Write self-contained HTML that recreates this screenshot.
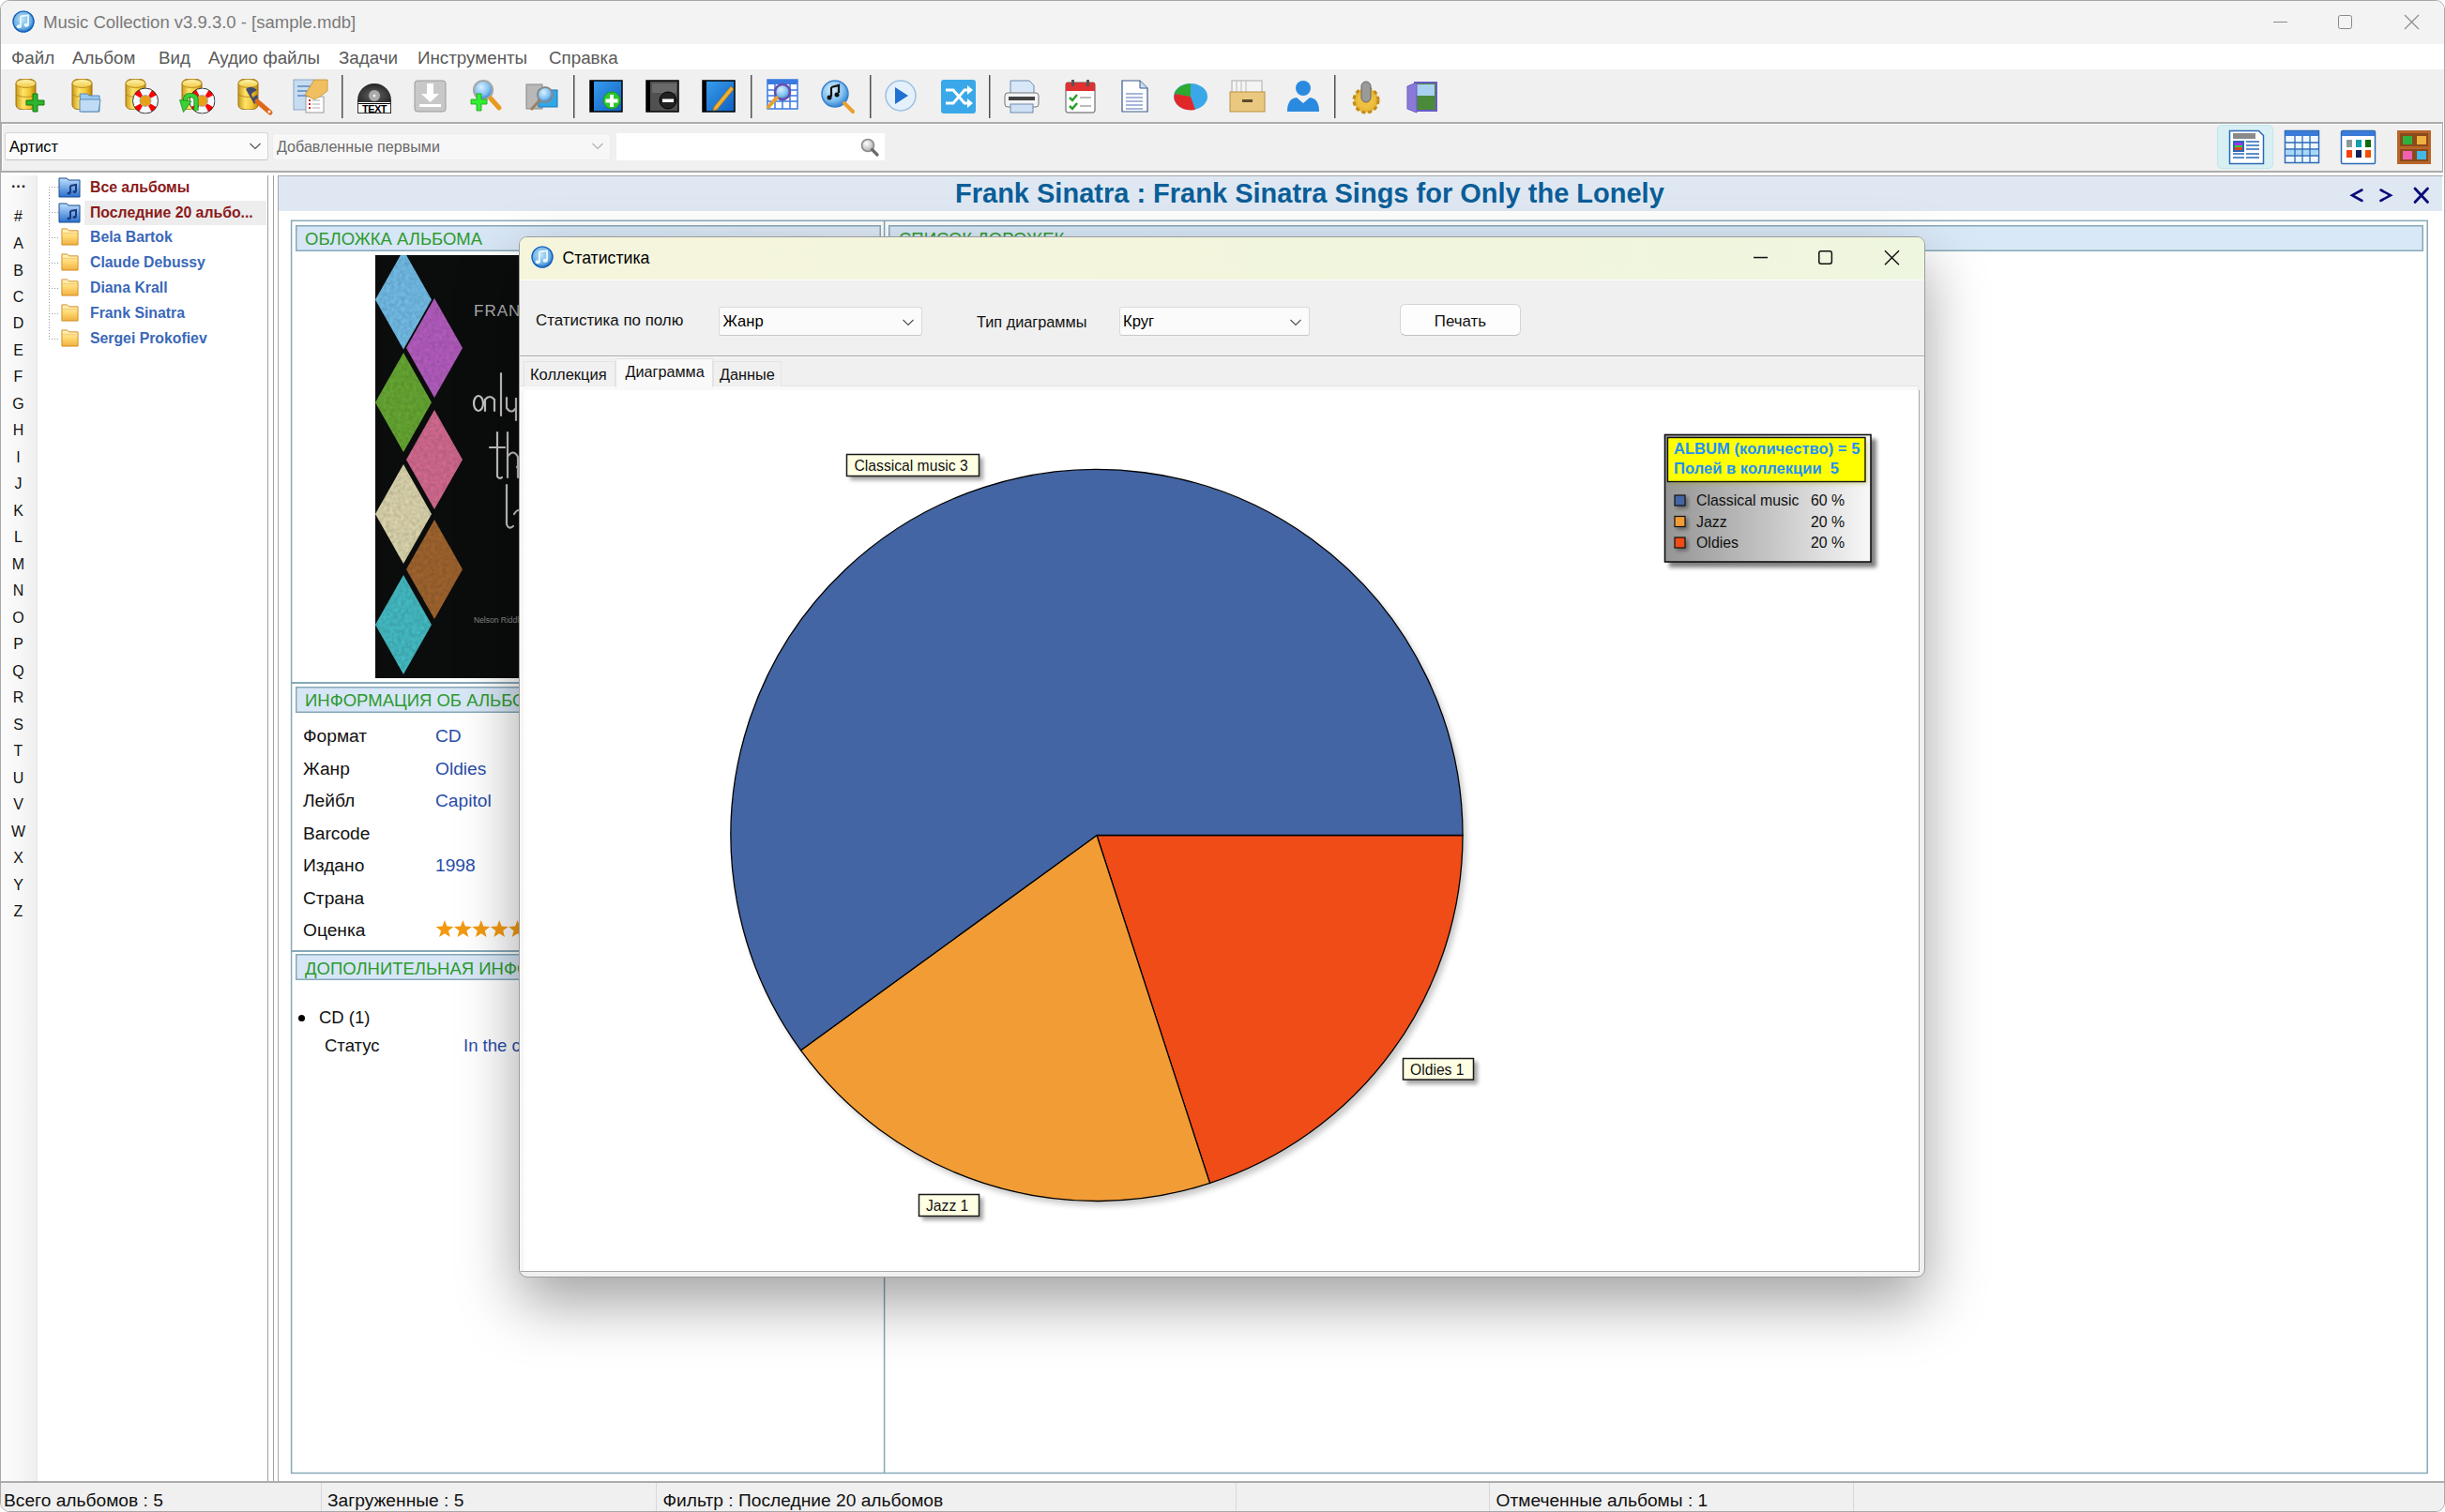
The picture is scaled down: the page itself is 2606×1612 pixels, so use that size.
<!DOCTYPE html>
<html><head><meta charset="utf-8">
<style>
*{box-sizing:border-box;margin:0;padding:0}
html,body{width:2606px;height:1612px;overflow:hidden;background:#ffffff;font-family:"Liberation Sans",sans-serif}
.a{position:absolute}
.t{position:absolute;white-space:nowrap;line-height:1}
</style></head><body>
<!-- window frame -->
<div class="a" style="left:0;top:0;width:2606px;height:1612px;border:1px solid #a8a8a8;border-radius:10px;overflow:hidden;background:#fff">
</div>

<!-- title bar -->
<div class="a" id="titlebar" style="left:1px;top:1px;width:2604px;height:46px;background:#f3f3f3;border-radius:9px 9px 0 0"></div>
<div class="t" style="left:46px;top:15px;font-size:18.5px;color:#7a7a7a">Music Collection v3.9.3.0 - [sample.mdb]</div>

<!-- menu -->
<div class="a" style="left:1px;top:47px;width:2604px;height:27px;background:#ffffff"></div>
<div class="t" style="top:53px;font-size:18.8px;color:#5a5a5a;left:12px">Файл</div>
<div class="t" style="top:53px;font-size:18.8px;color:#5a5a5a;left:77px">Альбом</div>
<div class="t" style="top:53px;font-size:18.8px;color:#5a5a5a;left:169px">Вид</div>
<div class="t" style="top:53px;font-size:18.8px;color:#5a5a5a;left:222px">Аудио файлы</div>
<div class="t" style="top:53px;font-size:18.8px;color:#5a5a5a;left:361px">Задачи</div>
<div class="t" style="top:53px;font-size:18.8px;color:#5a5a5a;left:445px">Инструменты</div>
<div class="t" style="top:53px;font-size:18.8px;color:#5a5a5a;left:585px">Справка</div>

<!-- toolbar -->
<div class="a" style="left:1px;top:74px;width:2604px;height:56px;background:#f0f0f0"></div>
<!-- second toolbar panel -->
<div class="a" style="left:1px;top:130px;width:2603px;height:54px;background:#f0f0f0;border:1px solid #acacac;border-top-width:2px;border-bottom-width:2px;box-shadow:inset 1px 1px 0 #fbfbfb"></div>


<!-- toolbar icons -->
<svg class="a" style="left:0;top:0" width="1600" height="130" viewBox="0 0 1600 130">
<defs>
<linearGradient id="gold" x1="0" x2="1" y1="0" y2="0"><stop offset="0" stop-color="#c99a1a"/><stop offset="0.35" stop-color="#ffe46a"/><stop offset="0.7" stop-color="#f2c532"/><stop offset="1" stop-color="#b8860b"/></linearGradient>
<linearGradient id="goldtop" x1="0" x2="0" y1="0" y2="1"><stop offset="0" stop-color="#fff6b0"/><stop offset="1" stop-color="#f0c840"/></linearGradient>
<linearGradient id="blueb" x1="0" x2="1" y1="0" y2="1"><stop offset="0" stop-color="#3aa0f0"/><stop offset="1" stop-color="#1060c0"/></linearGradient>
<radialGradient id="bluec" cx="0.4" cy="0.35" r="0.7"><stop offset="0" stop-color="#d8f0ff"/><stop offset="0.6" stop-color="#7fc0f0"/><stop offset="1" stop-color="#2a78c8"/></radialGradient>
<symbol id="db" viewBox="0 0 23 33"><path d="M1 5 Q1 0 11.5 0 Q22 0 22 5 V28 Q22 33 11.5 33 Q1 33 1 28 Z" fill="url(#gold)" stroke="#a07010" stroke-width="1"/><ellipse cx="11.5" cy="5" rx="10.5" ry="4.5" fill="url(#goldtop)" stroke="#b08018" stroke-width="0.8"/><path d="M1 17 Q11.5 22 22 17" fill="none" stroke="#b08018" stroke-width="0.8"/></symbol>
<symbol id="ring" viewBox="0 0 28 28"><circle cx="14" cy="14" r="9.8" fill="none" stroke="#f4fbff" stroke-width="7.5"/><circle cx="14" cy="14" r="9.8" fill="none" stroke="#f00" stroke-width="7.5" stroke-dasharray="5.2 10.2" stroke-dashoffset="-5" /><circle cx="14" cy="14" r="13.5" fill="none" stroke="#333" stroke-width="1"/><circle cx="14" cy="14" r="6" fill="#e8a018" stroke="#9ab" stroke-width="0.8"/></symbol>
</defs>
<!-- 1 db plus -->
<use href="#db" x="16" y="84" width="23" height="33"/>
<path d="M35 100h5v7h7v5h-7v7h-5v-7h-7v-5h7z" fill="#2db52d" stroke="#137a13" stroke-width="1"/>
<!-- 2 db folder -->
<use href="#db" x="76" y="84" width="23" height="33"/>
<path d="M85 100h8l2 2h11v17h-19z" fill="#9cc8ec" stroke="#5a8ab8" stroke-width="1"/><path d="M85 106h22l-2 13h-20z" fill="#c0dcf4" stroke="#5a8ab8" stroke-width="1"/>
<!-- 3 db ring -->
<use href="#db" x="133" y="84" width="23" height="33"/>
<use href="#ring" x="141" y="93.5" width="28" height="28"/>
<!-- 4 db arrow ring -->
<use href="#db" x="193" y="84" width="23" height="33"/>
<use href="#ring" x="201.5" y="93.5" width="28" height="28"/>
<path d="M209 118 V107 Q209 101.5 203 101.5 Q197.5 101.5 197.5 107 V109" fill="none" stroke="#189018" stroke-width="5.2"/><path d="M209 118 V107 Q209 101.5 203 101.5 Q197.5 101.5 197.5 107 V109" fill="none" stroke="#3ad03a" stroke-width="3.4"/><polygon points="191.5,106.5 204,108 195.5,119.5" fill="#3ad03a" stroke="#189018" stroke-width="0.8"/>
<!-- 5 db wrench -->
<use href="#db" x="253" y="84" width="23" height="33"/>
<path d="M262 95 q6 -5 12 1 l-5 3 q-2 3 1 5 l4 -3 q3 6 -3 10 z" fill="#404a70"/>
<path d="M274 108 l14 12" stroke="#e06a18" stroke-width="5" stroke-linecap="round"/><circle cx="287" cy="119" r="1.5" fill="#fff"/>
<!-- 6 doc hand -->
<rect x="313" y="85" width="22" height="32" fill="#c8dcf0" stroke="#8aa8c8"/>
<path d="M317 92h14M317 97h14M317 102h12" stroke="#5a88c0" stroke-width="1.5"/>
<rect x="326" y="103" width="19" height="17" fill="#fff" stroke="#999"/>
<path d="M329 107h2M329 111h2M329 115h2" stroke="#d02020" stroke-width="2"/><path d="M333 107h8M333 111h8M333 115h8" stroke="#aaa" stroke-width="1"/>
<path d="M325 101 l10 -16 h14 v12 l-8 6 l-6 3z" fill="#f0c060" stroke="#c09030" stroke-width="0.8"/>
<!-- sep -->
<rect x="364" y="80" width="1.5" height="46" fill="#505050"/>
<!-- 7 TEXT vinyl -->
<defs><radialGradient id="vin" cx="0.5" cy="0.6" r="0.6"><stop offset="0" stop-color="#666"/><stop offset="1" stop-color="#222"/></radialGradient></defs>
<path d="M381 107 a18 18 0 0 1 36 0 v3 h-36z" fill="url(#vin)"/><circle cx="399" cy="102" r="6" fill="#aaa"/><circle cx="399" cy="102" r="1.5" fill="#eee"/>
<rect x="381.5" y="108.5" width="35" height="12" fill="#fff" stroke="#333" stroke-width="1"/><rect x="382" y="110" width="34" height="1" fill="#000"/>
<text x="399" y="119.5" font-family="Liberation Sans" font-weight="bold" font-size="11" fill="#000" text-anchor="middle" letter-spacing="-0.5">TEXT</text>
<!-- 8 download -->
<rect x="442" y="86" width="33" height="33" rx="3" fill="#c8c8c8" stroke="#9a9a9a"/><path d="M455 89h7v11h6l-9.5 9l-9.5 -9h6z" fill="#fff"/><rect x="447" y="111" width="23" height="3" fill="#fff"/>
<!-- 9 search plus -->
<circle cx="515" cy="96" r="10" fill="url(#bluec)" stroke="#a8a8a8" stroke-width="2.2"/><path d="M523 105l9 10" stroke="#e89a20" stroke-width="5" stroke-linecap="round"/>
<path d="M508 100h5v6h6v5h-6v7h-5v-7h-6v-5h6z" fill="#33ee33" stroke="#18a018" stroke-width="0.8"/>
<!-- 10 camera magnifier -->
<rect x="561" y="90" width="17" height="26" fill="#b8b8b8" stroke="#888"/><rect x="574" y="96" width="20" height="18" fill="#30a8e8" stroke="#1878b8"/>
<circle cx="581" cy="101" r="8" fill="url(#bluec)" stroke="#888" stroke-width="2"/><path d="M575 107l-9 10" stroke="#a08060" stroke-width="3"/>
<!-- sep -->
<rect x="611" y="80" width="1.5" height="46" fill="#505050"/>
<!-- 11 blue book plus -->
<rect x="629" y="86" width="34" height="33" fill="url(#blueb)" stroke="#000" stroke-width="1.5"/><rect x="629" y="86" width="4" height="33" fill="#000"/>
<circle cx="652" cy="107" r="9" fill="#2ec82e" stroke="#1a9a1a"/><path d="M650 101h4v4.5h4.5v4h-4.5v4.5h-4v-4.5h-4.5v-4h4.5z" fill="#fff"/>
<!-- 12 black book minus -->
<rect x="689" y="86" width="34" height="33" fill="#505050" stroke="#000" stroke-width="1.5"/><rect x="689" y="86" width="4" height="33" fill="#000"/><rect x="695" y="89" width="26" height="10" fill="#6a6a6a"/>
<circle cx="712" cy="107" r="9" fill="#222" stroke="#000"/><rect x="706" y="105.5" width="12" height="3.5" fill="#fff"/>
<!-- 13 blue book pencil -->
<rect x="749" y="86" width="34" height="33" fill="url(#blueb)" stroke="#000" stroke-width="1.5"/><rect x="749" y="86" width="4" height="33" fill="#000"/>
<path d="M761 114 l18 -22 l3 3 l-18 22 l-4 1z" fill="#f0b030" stroke="#b07010" stroke-width="0.8"/>
<!-- sep -->
<rect x="800" y="80" width="1.5" height="46" fill="#505050"/>
<!-- 14 table search -->
<rect x="818" y="85" width="32" height="31" fill="#fff" stroke="#3a7ae0" stroke-width="1.5"/><rect x="818" y="85" width="32" height="5" fill="#3a7ae0"/>
<path d="M818 96h32M818 102h32M818 108h32M826 90v26M834 90v26M842 90v26" stroke="#3a7ae0" stroke-width="1.5"/>
<circle cx="834" cy="98" r="8" fill="url(#bluec)" stroke="#6a4ab0" stroke-width="2.5"/><path d="M828 104l-9 10" stroke="#e8a030" stroke-width="4" stroke-linecap="round"/>
<!-- 15 music search -->
<circle cx="890" cy="100" r="14" fill="url(#bluec)" stroke="#3a80d0" stroke-width="1.5"/><path d="M886 93v10M886 93l8 -2v8" stroke="#111" stroke-width="2.2" fill="none"/><circle cx="884" cy="104" r="2.5" fill="#111"/><circle cx="892" cy="101" r="2.5" fill="#111"/>
<path d="M900 110l9 9" stroke="#e8a030" stroke-width="4" stroke-linecap="round"/>
<!-- sep -->
<rect x="927" y="80" width="1.5" height="46" fill="#505050"/>
<!-- 16 play -->
<circle cx="960" cy="102" r="16" fill="#e4f0fb" stroke="#9cc0e0" stroke-width="1.5"/><path d="M954 93 l14 9 l-14 9z" fill="#1f70d0"/>
<!-- 17 shuffle -->
<rect x="1003" y="85" width="37" height="36" rx="3" fill="#3aa8e8"/><path d="M1008 96h8l12 14h6M1008 110h8l12 -14h6" stroke="#fff" stroke-width="3" fill="none"/><path d="M1031 91l6 5l-6 5zM1031 105l6 5l-6 5z" fill="#fff"/>
<!-- sep -->
<rect x="1054" y="80" width="1.5" height="46" fill="#505050"/>
<!-- 18 printer -->
<path d="M1077 86h20l5 5v10h-25z" fill="#d8e8f8" stroke="#6a8ab0"/><rect x="1071" y="99" width="36" height="15" rx="3" fill="#f4f4f4" stroke="#777"/><rect x="1075" y="103" width="28" height="4" fill="#444"/><rect x="1077" y="111" width="24" height="9" fill="#cfe0f4" stroke="#6a8ab0"/>
<!-- 19 calendar -->
<rect x="1136" y="88" width="31" height="32" rx="2" fill="#fff" stroke="#555"/><rect x="1136" y="88" width="31" height="9" fill="#e03030"/><rect x="1142" y="85" width="3" height="7" fill="#555"/><rect x="1158" y="85" width="3" height="7" fill="#555"/>
<path d="M1140 104l3 3l5 -6M1140 113l3 3l5 -6" stroke="#2aa02a" stroke-width="2.5" fill="none"/><path d="M1151 104h12M1151 113h12" stroke="#bbb" stroke-width="2"/>
<!-- 20 document -->
<path d="M1196 86h19l8 8v25h-27z" fill="#fff" stroke="#3a5a8a" stroke-width="1.2"/><path d="M1215 86v8h8" fill="#c8dcf4" stroke="#3a5a8a"/><path d="M1200 100h18M1200 104h18M1200 108h18M1200 112h18M1200 116h18" stroke="#8aa0d0" stroke-width="1.5"/>
<!-- 21 pie -->
<ellipse cx="1269" cy="103" rx="18" ry="14" fill="#3aa8e8"/><path d="M1269 103 L1269 89 A18 14 0 0 0 1252 100z" fill="#2eaa2e"/><path d="M1269 103 L1252 100 A18 14 0 0 0 1274 117z" fill="#e02828"/>
<!-- 22 archive -->
<rect x="1313" y="86" width="32" height="13" fill="#f4f4f4" stroke="#aaa"/><path d="M1318 86v13M1323 86v13M1328 86v13" stroke="#bbb"/><rect x="1311" y="98" width="37" height="21" fill="#eac880" stroke="#b89040"/><rect x="1324" y="106" width="11" height="3" fill="#5a4a2a"/>
<!-- 23 user -->
<circle cx="1389" cy="94" r="8" fill="#2a8ae0"/><path d="M1372 119 q0 -14 10 -15 l7 6 l7 -6 q10 1 10 15z" fill="#2a8ae0"/>
<!-- sep -->
<rect x="1422" y="80" width="1.5" height="46" fill="#505050"/>
<!-- 24 gear -->
<circle cx="1456" cy="107" r="13" fill="#e8b838" stroke="#c08a18" stroke-width="3" stroke-dasharray="4 3"/><circle cx="1456" cy="107" r="9" fill="#f0c040"/><rect x="1451" y="87" width="10" height="22" rx="5" fill="#9a9a9a" stroke="#666"/>
<!-- 25 door -->
<rect x="1508" y="88" width="23" height="30" fill="#4a8a3a" stroke="#6a5ac8" stroke-width="2"/><rect x="1510" y="90" width="19" height="12" fill="#a8d0f0"/><path d="M1500 92 l10 -4 v32 l-10 -4z" fill="#8a7ad8" stroke="#6a5ac8"/>
</svg>


<!-- title icon + controls -->
<svg class="a" style="left:13px;top:11px" width="24" height="24" viewBox="0 0 24 24">
<defs><radialGradient id="appic" cx="0.45" cy="0.4" r="0.6"><stop offset="0" stop-color="#bfe4f8"/><stop offset="0.7" stop-color="#6aaee0"/><stop offset="1" stop-color="#1a66c0"/></radialGradient></defs>
<circle cx="12" cy="12" r="11.5" fill="url(#appic)"/><circle cx="12" cy="12" r="11" fill="none" stroke="#1560c0" stroke-width="1.2"/>
<path d="M9 6.5 L17 5.2 V15.5" fill="none" stroke="#e8f8ff" stroke-width="1.8"/><path d="M9 6.5 V17" fill="none" stroke="#e8f8ff" stroke-width="1.8"/>
<ellipse cx="7.2" cy="17.2" rx="2.6" ry="2" fill="#e8f8ff"/><ellipse cx="15.2" cy="15.7" rx="2.6" ry="2" fill="#e8f8ff"/>
</svg>
<svg class="a" style="left:2400px;top:0" width="206" height="47" viewBox="2400 0 206 47">
<rect x="2423" y="23" width="15" height="1" fill="#8a8a8a"/>
<rect x="2492.5" y="16.5" width="14" height="14" rx="2" fill="none" stroke="#8a8a8a" stroke-width="1"/>
<path d="M2563 16 L2578 31 M2578 16 L2563 31" stroke="#8a8a8a" stroke-width="1.1"/>
</svg>

<!-- combos -->
<div class="a" style="left:5px;top:141px;width:281px;height:30px;background:#fbfbfb;border:1px solid #d6d6d6;border-bottom-color:#c4c4c4;border-radius:3px"></div>
<div class="t" style="left:10px;top:148px;font-size:16.4px;color:#000">Артист</div>
<svg class="a" style="left:265px;top:151px" width="14" height="10" viewBox="0 0 14 10"><path d="M1.5 2 L7 7.5 L12.5 2" fill="none" stroke="#505050" stroke-width="1.1"/></svg>
<div class="a" style="left:290px;top:142px;width:361px;height:29px;background:#f7f7f7;border:1px solid #ececec;border-radius:3px"></div>
<div class="t" style="left:295px;top:148px;font-size:16.1px;color:#6a6a6a">Добавленные первыми</div>
<svg class="a" style="left:630px;top:151px" width="14" height="10" viewBox="0 0 14 10"><path d="M1.5 2 L7 7.5 L12.5 2" fill="none" stroke="#b0b0b0" stroke-width="1.1"/></svg>
<div class="a" style="left:657px;top:142px;width:286px;height:29px;background:#ffffff"></div>
<svg class="a" style="left:915px;top:146px" width="24" height="22" viewBox="0 0 24 22"><defs><radialGradient id="mg" cx="0.4" cy="0.35" r="0.7"><stop offset="0" stop-color="#ffffff"/><stop offset="1" stop-color="#a8a8a8"/></radialGradient></defs><circle cx="10" cy="9" r="6.5" fill="url(#mg)" stroke="#8a8a8a" stroke-width="1.6"/><path d="M14.5 13.5 L20 19" stroke="#6a6a6a" stroke-width="3.2" stroke-linecap="round"/></svg>

<!-- view buttons -->
<div class="a" style="left:2363px;top:133px;width:60px;height:47px;background:#d8eff3;border:1px solid #bfe6ee;border-radius:5px"></div>
<svg class="a" style="left:2370px;top:133px" width="236" height="47" viewBox="2370 133 236 47">
<path d="M2376.5 139.5 h31 l5 5 v30 h-36z" fill="#fff" stroke="#2a6ab8" stroke-width="1.5"/>
<rect x="2380" y="142" width="24" height="6" fill="#8a8a8a"/><rect x="2380" y="150" width="12" height="12" fill="#2a6ab8"/>
<rect x="2382" y="152" width="8" height="8" fill="#e84020"/><rect x="2382" y="152" width="8" height="3" fill="#a030f0"/><rect x="2382" y="155" width="8" height="2" fill="#30d030"/>
<path d="M2394 151h14M2394 155h14M2394 159h14M2380 164h12M2394 164h14M2380 168h12M2394 168h14" stroke="#2a6ab8" stroke-width="1.3"/>
<rect x="2435.5" y="139.5" width="36" height="34" fill="#f0f8ff" stroke="#2a6ab8" stroke-width="1.5"/><rect x="2436" y="140" width="35" height="5" fill="#3a7ad8"/>
<rect x="2437" y="160" width="33" height="5" fill="#a8d8f8"/>
<path d="M2436 152h35M2436 159h35M2436 166h35M2446 145v28M2454 145v28M2462 145v28" stroke="#2a6ab8" stroke-width="1.3"/>
<rect x="2495.5" y="139.5" width="36" height="35" rx="1.5" fill="#fff" stroke="#2a6ab8" stroke-width="1.5"/><rect x="2496" y="140" width="35" height="5" fill="#3a7ad8"/>
<rect x="2501" y="149" width="6" height="8" fill="#8a9a9a"/><rect x="2511" y="149" width="6" height="8" fill="#10a0b0"/><rect x="2521" y="149" width="6" height="8" fill="#106a10"/>
<rect x="2501" y="160" width="6" height="8" fill="#f04010"/><rect x="2511" y="160" width="6" height="8" fill="#10205a"/><rect x="2521" y="160" width="6" height="8" fill="#f05000"/>
<rect x="2555" y="139" width="36" height="36" fill="#b8642a"/><rect x="2558" y="142" width="30" height="30" fill="#8a4a1a"/>
<rect x="2561" y="145" width="10" height="9" fill="#30b040"/><rect x="2576" y="145" width="10" height="9" fill="#f0b040"/>
<rect x="2561" y="161" width="10" height="9" fill="#f060b0"/><rect x="2576" y="161" width="10" height="9" fill="#40b8e8"/>
<rect x="2558" y="156" width="30" height="3" fill="#b8642a"/>
</svg>

<!-- left panel -->
<div class="a" style="left:1px;top:187px;width:39px;height:1392px;background:linear-gradient(to right,#fcfcfc 0%,#f6f6f6 60%,#efefef 100%);border-right:1px solid #e6e6e6"></div>

<!-- alphabet -->
<div class="t" style="left:0;width:40px;text-align:center;top:191px;font-size:16px;color:#222;font-weight:bold">···</div>
<div class="t" style="left:0;width:39px;text-align:center;top:223.0px;font-size:16px;color:#111">#</div>
<div class="t" style="left:0;width:39px;text-align:center;top:252.0px;font-size:16px;color:#111">A</div>
<div class="t" style="left:0;width:39px;text-align:center;top:280.5px;font-size:16px;color:#111">B</div>
<div class="t" style="left:0;width:39px;text-align:center;top:309.0px;font-size:16px;color:#111">C</div>
<div class="t" style="left:0;width:39px;text-align:center;top:337.4px;font-size:16px;color:#111">D</div>
<div class="t" style="left:0;width:39px;text-align:center;top:365.9px;font-size:16px;color:#111">E</div>
<div class="t" style="left:0;width:39px;text-align:center;top:394.4px;font-size:16px;color:#111">F</div>
<div class="t" style="left:0;width:39px;text-align:center;top:422.9px;font-size:16px;color:#111">G</div>
<div class="t" style="left:0;width:39px;text-align:center;top:451.4px;font-size:16px;color:#111">H</div>
<div class="t" style="left:0;width:39px;text-align:center;top:479.8px;font-size:16px;color:#111">I</div>
<div class="t" style="left:0;width:39px;text-align:center;top:508.3px;font-size:16px;color:#111">J</div>
<div class="t" style="left:0;width:39px;text-align:center;top:536.8px;font-size:16px;color:#111">K</div>
<div class="t" style="left:0;width:39px;text-align:center;top:565.3px;font-size:16px;color:#111">L</div>
<div class="t" style="left:0;width:39px;text-align:center;top:593.8px;font-size:16px;color:#111">M</div>
<div class="t" style="left:0;width:39px;text-align:center;top:622.2px;font-size:16px;color:#111">N</div>
<div class="t" style="left:0;width:39px;text-align:center;top:650.7px;font-size:16px;color:#111">O</div>
<div class="t" style="left:0;width:39px;text-align:center;top:679.2px;font-size:16px;color:#111">P</div>
<div class="t" style="left:0;width:39px;text-align:center;top:707.7px;font-size:16px;color:#111">Q</div>
<div class="t" style="left:0;width:39px;text-align:center;top:736.2px;font-size:16px;color:#111">R</div>
<div class="t" style="left:0;width:39px;text-align:center;top:764.6px;font-size:16px;color:#111">S</div>
<div class="t" style="left:0;width:39px;text-align:center;top:793.1px;font-size:16px;color:#111">T</div>
<div class="t" style="left:0;width:39px;text-align:center;top:821.6px;font-size:16px;color:#111">U</div>
<div class="t" style="left:0;width:39px;text-align:center;top:850.1px;font-size:16px;color:#111">V</div>
<div class="t" style="left:0;width:39px;text-align:center;top:878.6px;font-size:16px;color:#111">W</div>
<div class="t" style="left:0;width:39px;text-align:center;top:907.0px;font-size:16px;color:#111">X</div>
<div class="t" style="left:0;width:39px;text-align:center;top:935.5px;font-size:16px;color:#111">Y</div>
<div class="t" style="left:0;width:39px;text-align:center;top:964.0px;font-size:16px;color:#111">Z</div>

<!-- tree -->
<div class="a" style="left:90px;top:214px;width:194px;height:26px;background:#ededed"></div>
<svg class="a" style="left:40px;top:183px" width="60" height="200" viewBox="40 183 60 200">
<defs>
<linearGradient id="fold" x1="0" x2="0" y1="0" y2="1"><stop offset="0" stop-color="#fff6c8"/><stop offset="0.5" stop-color="#ffd870"/><stop offset="1" stop-color="#f0b040"/></linearGradient>
<linearGradient id="foldb" x1="0" x2="0" y1="0" y2="1"><stop offset="0" stop-color="#bfe0ff"/><stop offset="1" stop-color="#2a70d0"/></linearGradient>
<symbol id="fy" viewBox="0 0 20 20"><path d="M1 1 h6 l2 2 h10 v16 h-18z" fill="url(#fold)" stroke="#d08a20" stroke-width="1"/><path d="M1 6 h18" stroke="#f0c060" stroke-width="0.8"/></symbol>
<symbol id="fb" viewBox="0 0 24 22"><path d="M1 1 h8 l2 2 h12 v18 h-22z" fill="url(#foldb)" stroke="#1a4a8a" stroke-width="1"/><path d="M13 9 v8 M13 9 l6 -1 v7" stroke="#1a3a7a" stroke-width="2" fill="none"/><ellipse cx="11.5" cy="17" rx="2" ry="1.5" fill="#1a3a7a"/><ellipse cx="17.5" cy="15.5" rx="2" ry="1.5" fill="#1a3a7a"/></symbol>
</defs>
<path d="M52.5 199 V361.5" stroke="#9a9a9a" stroke-width="1" stroke-dasharray="1 2"/>
<path d="M52 199.5 H62 M52 226.5 H62 M52 253.5 H64 M52 280.5 H64 M52 307.5 H64 M52 334.5 H64 M52 361.5 H64" stroke="#9a9a9a" stroke-width="1" stroke-dasharray="1 2"/>
<use href="#fb" x="62" y="189" width="24" height="22"/>
<use href="#fb" x="62" y="216" width="24" height="22"/>
<use href="#fy" x="65" y="243" width="19" height="19"/>
<use href="#fy" x="65" y="270" width="19" height="19"/>
<use href="#fy" x="65" y="297" width="19" height="19"/>
<use href="#fy" x="65" y="324" width="19" height="19"/>
<use href="#fy" x="65" y="351" width="19" height="19"/>
</svg>
<div class="t" style="left:96px;top:192px;font-size:15.8px;font-weight:bold;color:#8b1a1a">Все альбомы</div>
<div class="t" style="left:96px;top:219px;font-size:15.8px;font-weight:bold;color:#8b1a1a">Последние 20 альбо...</div>
<div class="t" style="left:96px;top:245px;font-size:15.8px;font-weight:bold;color:#3a68b8">Bela Bartok</div>
<div class="t" style="left:96px;top:272px;font-size:15.8px;font-weight:bold;color:#3a68b8">Claude Debussy</div>
<div class="t" style="left:96px;top:299px;font-size:15.8px;font-weight:bold;color:#3a68b8">Diana Krall</div>
<div class="t" style="left:96px;top:326px;font-size:15.8px;font-weight:bold;color:#3a68b8">Frank Sinatra</div>
<div class="t" style="left:96px;top:353px;font-size:15.8px;font-weight:bold;color:#3a68b8">Sergei Prokofiev</div>

<!-- splitter -->
<div class="a" style="left:285px;top:187px;width:1px;height:1392px;background:#a0a0a0"></div>
<div class="a" style="left:291px;top:187px;width:1px;height:1392px;background:#a0a0a0"></div>

<!-- main panel -->
<div class="a" style="left:296px;top:187px;width:2308px;height:1392px;border-left:1px solid #a8a8a8;border-top:1px solid #a8a8a8;background:#fff"></div>
<div class="a" style="left:297px;top:188px;width:2306px;height:37px;background:#dfe8f2"></div>


<!-- main header -->
<div class="t" style="left:1018px;top:192.0px;font-size:29px;font-weight:bold;color:#0b5e98">Frank Sinatra : Frank Sinatra Sings for Only the Lonely</div>
<svg class="a" style="left:2500px;top:195px" width="100" height="26" viewBox="2500 195 100 26">
<path d="M2517.5 202.5 L2507 208.2 L2517.5 214" fill="none" stroke="#0a0a7a" stroke-width="2.6" stroke-linecap="round" stroke-linejoin="miter"/>
<path d="M2537.5 202.5 L2548 208.2 L2537.5 214" fill="none" stroke="#0a0a7a" stroke-width="2.6" stroke-linecap="round"/>
<path d="M2574 201 L2587.5 215.5 M2587.5 201 L2574 215.5" fill="none" stroke="#0a0a7a" stroke-width="2.8" stroke-linecap="round"/>
</svg>

<!-- outer panel -->
<svg class="a" style="left:300px;top:225px" width="2300" height="1360" viewBox="300 225 2300 1360"><rect x="310.6" y="235.3" width="2276.6" height="1335.2" fill="none" stroke="#86a8b8" stroke-width="1.5"/><path d="M942.6 235 V1570.5" stroke="#86a8b8" stroke-width="1.5"/></svg>

<!-- header boxes -->
<div class="a" style="left:315px;top:239.5px;width:624px;height:28.3px;box-shadow:inset 0 0 0 1.5px #86a8b8;background:linear-gradient(to right,#d6e6f7,#dde9f5)"></div>
<div class="t" style="left:325px;top:245.7px;font-size:18.5px;color:#2e9a2e">ОБЛОЖКА АЛЬБОМА</div>
<div class="a" style="left:947px;top:239.5px;width:1636px;height:28.3px;box-shadow:inset 0 0 0 1.5px #86a8b8;background:#d9e8f7"></div>
<div class="t" style="left:958px;top:245.7px;font-size:18.5px;color:#2e9a2e">СПИСОК ДОРОЖЕК</div>

<div class="a" style="left:311px;top:727px;width:631px;height:1.5px;background:#86a8b8"></div>
<div class="a" style="left:315px;top:732px;width:624px;height:28px;box-shadow:inset 0 0 0 1.5px #86a8b8;background:linear-gradient(to right,#d6e6f7,#dde9f5)"></div>
<div class="t" style="left:325px;top:738.3px;font-size:18.5px;color:#2e9a2e">ИНФОРМАЦИЯ ОБ АЛЬБОМЕ</div>
<div class="t" style="left:323px;top:774.9px;font-size:19.2px;color:#111">Формат</div>
<div class="t" style="left:464px;top:774.9px;font-size:19.2px;color:#2a4ea8">CD</div>
<div class="t" style="left:323px;top:809.5px;font-size:19.2px;color:#111">Жанр</div>
<div class="t" style="left:464px;top:809.5px;font-size:19.2px;color:#2a4ea8">Oldies</div>
<div class="t" style="left:323px;top:844.0px;font-size:19.2px;color:#111">Лейбл</div>
<div class="t" style="left:464px;top:844.0px;font-size:19.2px;color:#2a4ea8">Capitol</div>
<div class="t" style="left:323px;top:878.6px;font-size:19.2px;color:#111">Barcode</div>
<div class="t" style="left:323px;top:913.1px;font-size:19.2px;color:#111">Издано</div>
<div class="t" style="left:464px;top:913.1px;font-size:19.2px;color:#2a4ea8">1998</div>
<div class="t" style="left:323px;top:947.7px;font-size:19.2px;color:#111">Страна</div>
<div class="t" style="left:323px;top:982.2px;font-size:19.2px;color:#111">Оценка</div>
<svg class="a" style="left:462px;top:980px" width="100" height="22" viewBox="0 0 100 22"><polygon points="12.00,1.00 14.47,7.60 21.51,7.91 15.99,12.30 17.88,19.09 12.00,15.20 6.12,19.09 8.01,12.30 2.49,7.91 9.53,7.60" fill="#f39a12"/><polygon points="31.40,1.00 33.87,7.60 40.91,7.91 35.39,12.30 37.28,19.09 31.40,15.20 25.52,19.09 27.41,12.30 21.89,7.91 28.93,7.60" fill="#f39a12"/><polygon points="50.80,1.00 53.27,7.60 60.31,7.91 54.79,12.30 56.68,19.09 50.80,15.20 44.92,19.09 46.81,12.30 41.29,7.91 48.33,7.60" fill="#f39a12"/><polygon points="70.20,1.00 72.67,7.60 79.71,7.91 74.19,12.30 76.08,19.09 70.20,15.20 64.32,19.09 66.21,12.30 60.69,7.91 67.73,7.60" fill="#f39a12"/><polygon points="89.60,1.00 92.07,7.60 99.11,7.91 93.59,12.30 95.48,19.09 89.60,15.20 83.72,19.09 85.61,12.30 80.09,7.91 87.13,7.60" fill="#f39a12"/></svg>

<div class="a" style="left:311px;top:1013px;width:631px;height:1.5px;background:#86a8b8"></div>
<div class="a" style="left:315px;top:1017px;width:624px;height:28px;box-shadow:inset 0 0 0 1.5px #86a8b8;background:linear-gradient(to right,#d6e6f7,#dde9f5)"></div>
<div class="t" style="left:325px;top:1023.8px;font-size:18.5px;color:#2e9a2e">ДОПОЛНИТЕЛЬНАЯ ИНФОРМАЦИЯ</div>
<div class="a" style="left:317.5px;top:1082px;width:7px;height:7px;border-radius:50%;background:#000"></div>
<div class="t" style="left:340px;top:1075.7px;font-size:18.5px;color:#111">CD (1)</div>
<div class="t" style="left:346px;top:1106.3px;font-size:18.5px;color:#111">Статус</div>
<div class="t" style="left:494px;top:1106.3px;font-size:18.5px;color:#2a4ea8">In the collection</div>

<!-- album cover -->
<svg class="a" style="left:400px;top:272px" width="452" height="451" viewBox="0 0 452 451">
<defs><filter id="tex"><feTurbulence type="fractalNoise" baseFrequency="0.25" numOctaves="2" result="n"/><feColorMatrix in="n" type="matrix" values="0 0 0 0 0  0 0 0 0 0  0 0 0 0 0  0 0 0 -0.25 1.05" result="m"/><feComposite in="SourceGraphic" in2="m" operator="in"/></filter></defs>
<rect width="452" height="451" fill="#0b0c0c"/>
<g filter="url(#tex)"><polygon points="30,-5.5 60,47.5 30,100.5 0,47.5" fill="#72bde8"/><polygon points="63,46 93,99 63,152 33,99" fill="#b45cc0"/><polygon points="30,104 60,157 30,210 0,157" fill="#66a832"/><polygon points="63,165 93,218 63,271 33,218" fill="#d46a90"/><polygon points="30,223 60,276 30,329 0,276" fill="#ddd6ae"/><polygon points="63,282 93,335 63,388 33,335" fill="#a0642e"/><polygon points="30,341 60,394 30,447 0,394" fill="#44bcc4"/></g>
<text x="105" y="65" font-family="Liberation Sans" font-size="17" fill="#b0b0b0" letter-spacing="1">FRANK SINATRA</text>
<g fill="none" stroke="#c4c4c4" stroke-width="2.2" stroke-linecap="round">
<ellipse cx="110" cy="158" rx="5" ry="8"/>
<path d="M117 166 V154 q5 -6 10 0 V166"/>
<path d="M134 126 V171"/>
<path d="M140 152 V163 q5 7 10 0 V152 V176"/>
<path d="M130 189 V236 q2 3 5 1 M122 205 H138"/>
<path d="M141 189 V237 M141 215 q6 -9 11 0 V237"/>
<path d="M151 226 q6 -8 6 2"/>
<path d="M140 245 V287 q2 6 7 2"/>
<path d="M148 276 q5 -8 8 0"/>
</g>
<text x="105" y="392" font-family="Liberation Sans" font-size="8.5" fill="#8a8a8a">Nelson Riddle orch</text>
</svg>

<!-- status bar -->
<div class="a" style="left:1px;top:1579px;width:2604px;height:32px;background:#f0f0f0;border-top:2px solid #acacac;border-radius:0 0 9px 9px"></div>

<!-- status text -->
<div class="a" style="left:342px;top:1581px;width:1px;height:30px;background:#d8d8d8"></div>
<div class="a" style="left:699px;top:1581px;width:1px;height:30px;background:#d8d8d8"></div>
<div class="a" style="left:1317px;top:1581px;width:1px;height:30px;background:#d8d8d8"></div>
<div class="a" style="left:1587px;top:1581px;width:1px;height:30px;background:#d8d8d8"></div>
<div class="a" style="left:1975px;top:1581px;width:1px;height:30px;background:#d8d8d8"></div>
<div class="t" style="left:4px;top:1589.7px;font-size:19.2px;color:#111">Всего альбомов : 5</div>
<div class="t" style="left:349px;top:1589.7px;font-size:19.2px;color:#111">Загруженные : 5</div>
<div class="t" style="left:706.5px;top:1589.7px;font-size:19.2px;color:#111">Фильтр : Последние 20 альбомов</div>
<div class="t" style="left:1594.5px;top:1589.7px;font-size:19.2px;color:#111">Отмеченные альбомы : 1</div>

<!-- dialog -->
<div class="a" style="left:553px;top:252px;width:1499px;height:1110px;border:1px solid #9c9c9c;border-radius:9px;background:#f0f0f0;box-shadow:0 27px 64px rgba(0,0,0,0.37)"></div>
<div class="a" style="left:554px;top:253px;width:1497px;height:45px;border-radius:8px 8px 0 0;background:linear-gradient(to right,#f5f5dc,#f2f5dd 60%,#eff6df)"></div>
<svg class="a" style="left:566px;top:262px" width="24" height="24" viewBox="0 0 24 24">
<circle cx="12" cy="12" r="11.5" fill="url(#appic)"/><circle cx="12" cy="12" r="11" fill="none" stroke="#1560c0" stroke-width="1.2"/>
<path d="M9 6.5 L17 5.2 V15.5" fill="none" stroke="#e8f8ff" stroke-width="1.8"/><path d="M9 6.5 V17" fill="none" stroke="#e8f8ff" stroke-width="1.8"/>
<ellipse cx="7.2" cy="17.2" rx="2.6" ry="2" fill="#e8f8ff"/><ellipse cx="15.2" cy="15.7" rx="2.6" ry="2" fill="#e8f8ff"/>
</svg>
<div class="t" style="left:599.5px;top:266.9px;font-size:17.7px;color:#000">Статистика</div>
<svg class="a" style="left:1860px;top:260px" width="180" height="30" viewBox="1860 260 180 30">
<rect x="1869" y="273.8" width="15" height="1.5" fill="#111"/>
<rect x="1938.8" y="267.7" width="13.6" height="13.6" rx="2.2" fill="none" stroke="#111" stroke-width="1.5"/>
<path d="M2009 267.3 L2024 282.3 M2024 267.3 L2009 282.3" stroke="#111" stroke-width="1.45"/>
</svg>
<div class="a" style="left:554px;top:298px;width:1497px;height:1px;background:#fcfcfc"></div>
<!-- controls -->
<div class="t" style="left:571px;top:334.3px;font-size:16.9px;color:#111">Статистика по полю</div>
<div class="a" style="left:766px;top:327px;width:217px;height:31px;background:#fbfbfb;border:1px solid #d9d9d9;border-bottom-color:#c8c8c8;border-radius:3px"></div>
<div class="t" style="left:770.5px;top:334.5px;font-size:16.6px;color:#000">Жанр</div>
<svg class="a" style="left:961px;top:339px" width="14" height="10" viewBox="0 0 14 10"><path d="M1.5 2 L7 7.5 L12.5 2" fill="none" stroke="#505050" stroke-width="1.1"/></svg>
<div class="t" style="left:1041px;top:334.8px;font-size:16.3px;color:#111">Тип диаграммы</div>
<div class="a" style="left:1193px;top:327px;width:203px;height:31px;background:#fbfbfb;border:1px solid #d9d9d9;border-bottom-color:#c8c8c8;border-radius:3px"></div>
<div class="t" style="left:1197px;top:334.5px;font-size:16.6px;color:#000">Круг</div>
<svg class="a" style="left:1374px;top:339px" width="14" height="10" viewBox="0 0 14 10"><path d="M1.5 2 L7 7.5 L12.5 2" fill="none" stroke="#505050" stroke-width="1.1"/></svg>
<div class="a" style="left:1492px;top:324px;width:129px;height:34px;background:#fdfdfd;border:1px solid #d4d4d4;border-bottom-color:#c0c0c0;border-radius:6px"></div>
<div class="t" style="left:1492px;width:129px;text-align:center;top:334.7px;font-size:16.9px;color:#111">Печать</div>
<div class="a" style="left:554px;top:379px;width:1497px;height:1px;background:#a9a9a9"></div>
<div class="a" style="left:554px;top:380px;width:1497px;height:1px;background:#fbfbfb"></div>
<!-- tabs -->
<div class="a" style="left:554px;top:411px;width:1491px;height:944px;background:#f9f9f9;border:1px solid #e3e3e3;border-left:none"></div>
<div class="a" style="left:558px;top:385px;width:98px;height:27px;background:#f0f0f0;border:1px solid #e3e3e3;border-bottom:none"></div>
<div class="a" style="left:760px;top:385px;width:73px;height:27px;background:#f0f0f0;border:1px solid #e3e3e3;border-bottom:none"></div>
<div class="a" style="left:656px;top:382px;width:104px;height:31px;background:#f9f9f9;border:1px solid #e3e3e3;border-bottom:none"></div>
<div class="t" style="left:565px;top:390.6px;font-size:16.5px;color:#111">Коллекция</div>
<div class="t" style="left:666.5px;top:388.0px;font-size:16.2px;color:#111">Диаграмма</div>
<div class="t" style="left:767px;top:390.8px;font-size:16.3px;color:#111">Данные</div>
<!-- chart area -->
<div class="a" style="left:555px;top:416px;width:1491px;height:940px;background:#ffffff;border-right:1px solid #a8a8a8;border-bottom:1px solid #a8a8a8"></div>
<div class="a" style="left:555px;top:416px;width:5px;height:939px;background:linear-gradient(to right,#f4f4f4,#fdfdfd)"></div>

<svg class="a" style="left:556px;top:417px" width="1489" height="938" viewBox="556 417 1489 938">
<defs>
<filter id="sh" x="-10%" y="-10%" width="120%" height="120%"><feGaussianBlur stdDeviation="3"/></filter>
<filter id="sh2" x="-20%" y="-50%" width="140%" height="200%"><feGaussianBlur stdDeviation="2"/></filter>
<linearGradient id="leg" x1="0" x2="1" y1="0" y2="0"><stop offset="0" stop-color="#959595"/><stop offset="0.5" stop-color="#c4c4c4"/><stop offset="1" stop-color="#f8f8f8"/></linearGradient>
</defs>
<circle cx="1169" cy="890.5" r="390" fill="#000" opacity="0.22" filter="url(#sh)" transform="translate(4,5)"/>
<path d="M1169 890.5 L1559 890.5 A390 390 0 0 1 1289.52 1261.41 Z" fill="#f04c17" stroke="#000" stroke-width="1.3"/>
<path d="M1169 890.5 L1289.52 1261.41 A390 390 0 0 1 853.48 1119.74 Z" fill="#f29c36" stroke="#000" stroke-width="1.3"/>
<path d="M1169 890.5 L853.48 1119.74 A390 390 0 1 1 1559 890.5 Z" fill="#4465a3" stroke="#000" stroke-width="1.3"/>
<!-- labels -->
<rect x="906" y="488" width="142" height="24" fill="#000" opacity="0.35" filter="url(#sh2)"/>
<rect x="902.5" y="484.5" width="141" height="23" fill="#ffffe4" stroke="#1a1a1a" stroke-width="1.5"/>
<text x="910.5" y="502" font-family="Liberation Sans" font-size="15.7" fill="#111">Classical music 3</text>
<rect x="1499" y="1132" width="76" height="24" fill="#000" opacity="0.35" filter="url(#sh2)"/>
<rect x="1495.5" y="1128.5" width="75" height="22.5" fill="#ffffe4" stroke="#1a1a1a" stroke-width="1.5"/>
<text x="1503" y="1146" font-family="Liberation Sans" font-size="15.7" fill="#111">Oldies 1</text>
<rect x="983" y="1277" width="65" height="24" fill="#000" opacity="0.35" filter="url(#sh2)"/>
<rect x="979.5" y="1273.5" width="64" height="23" fill="#ffffe4" stroke="#1a1a1a" stroke-width="1.5"/>
<text x="987" y="1291" font-family="Liberation Sans" font-size="15.7" fill="#111">Jazz 1</text>
<!-- legend -->
<rect x="1779" y="468" width="221" height="137" fill="#000" opacity="0.5" filter="url(#sh2)"/>
<rect x="1774.5" y="463.5" width="219.5" height="135.5" fill="url(#leg)" stroke="#111" stroke-width="1.6"/>
<rect x="1780" y="470" width="210" height="46" fill="#a0a000" opacity="0.35" filter="url(#sh2)"/>
<rect x="1777.5" y="466.5" width="210.5" height="47" fill="#ffff00" stroke="#111" stroke-width="1.4"/>
<text x="1784" y="484" font-family="Liberation Sans" font-weight="bold" font-size="16.6" fill="#1e90ff">ALBUM (количество) = 5</text>
<text x="1784" y="504.5" font-family="Liberation Sans" font-weight="bold" font-size="16.6" fill="#1e90ff" xml:space="preserve">Полей в коллекции  5</text>
<rect x="1787" y="530" width="12" height="12" fill="#000" opacity="0.4" filter="url(#sh2)"/>
<rect x="1785" y="528" width="11" height="11" fill="#4465a3" stroke="#111" stroke-width="1.2"/>
<rect x="1787" y="552.5" width="12" height="12" fill="#000" opacity="0.4" filter="url(#sh2)"/>
<rect x="1785" y="550.5" width="11" height="11" fill="#f29c36" stroke="#111" stroke-width="1.2"/>
<rect x="1787" y="575" width="12" height="12" fill="#000" opacity="0.4" filter="url(#sh2)"/>
<rect x="1785" y="573" width="11" height="11" fill="#f04c17" stroke="#111" stroke-width="1.2"/>
<text x="1808" y="539" font-family="Liberation Sans" font-size="15.9" fill="#111">Classical music</text>
<text x="1808" y="561.5" font-family="Liberation Sans" font-size="15.9" fill="#111">Jazz</text>
<text x="1808" y="584" font-family="Liberation Sans" font-size="15.9" fill="#111">Oldies</text>
<text x="1930" y="539" font-family="Liberation Sans" font-size="15.9" fill="#111">60 %</text>
<text x="1930" y="561.5" font-family="Liberation Sans" font-size="15.9" fill="#111">20 %</text>
<text x="1930" y="584" font-family="Liberation Sans" font-size="15.9" fill="#111">20 %</text>
</svg>

</body></html>
